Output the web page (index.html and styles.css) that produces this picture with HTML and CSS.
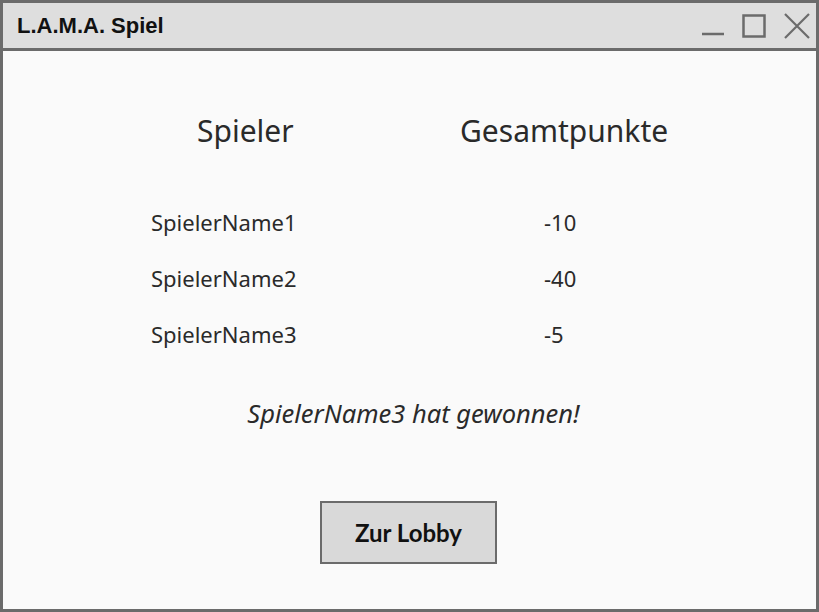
FILE: index.html
```html
<!DOCTYPE html>
<html lang="de">
<head>
<meta charset="utf-8">
<title>L.A.M.A. Spiel</title>
<link rel="stylesheet" href="styles.css">
</head>
<body>
<div class="window">
  <div class="titlebar">
    <span class="title">L.A.M.A. Spiel</span>
    <div class="controls">
      <svg width="22" height="22" viewBox="0 0 22 22"><line x1="0" y1="19" x2="22" y2="19" stroke="#6b6b6b" stroke-width="2.5"/></svg>
      <svg width="24" height="24" viewBox="0 0 24 24"><rect x="1.5" y="1.5" width="21" height="21" fill="none" stroke="#6b6b6b" stroke-width="2.5"/></svg>
      <svg width="26" height="26" viewBox="0 0 26 26"><path d="M1 1 L25 25 M25 1 L1 25" stroke="#6b6b6b" stroke-width="2.2" fill="none"/></svg>
    </div>
  </div>
  <div class="content">
    <div class="head-row">
      <span class="h-player">Spieler</span>
      <span class="h-points">Gesamtpunkte</span>
    </div>
    <div class="rows">
      <span class="name">SpielerName1</span><span class="pts">-10</span>
      <span class="name">SpielerName2</span><span class="pts">-40</span>
      <span class="name">SpielerName3</span><span class="pts">-5</span>
    </div>
    <p class="winner">SpielerName3 hat gewonnen!</p>
    <button class="lobby">Zur Lobby</button>
  </div>
</div>
</body>
</html>
```
FILE: styles.css
```css
* { box-sizing: border-box; }
html, body { margin: 0; padding: 0; background: #fafafa; }
.window {
  width: 819px;
  height: 612px;
  border: 3px solid #6b6b6b;
  background: #fafafa;
  display: flex;
  flex-direction: column;
}
.titlebar {
  height: 48px;
  background: #dedede;
  border-bottom: 3px solid #6b6b6b;
  display: flex;
  align-items: center;
  justify-content: space-between;
  padding: 0 6px 0 14px;
}
.title {
  font-family: "Liberation Sans", Arial, sans-serif;
  font-weight: bold;
  font-size: 22px;
  color: #111;
}
.controls {
  display: flex;
  align-items: center;
  gap: 18px;
}
.content {
  flex: 1;
  display: flex;
  flex-direction: column;
  font-family: "Noto Sans", sans-serif;
  color: #2a2a2a;
}
.head-row {
  display: flex;
  margin-top: 62px;
  font-size: 30px;
  line-height: 36px;
}
.h-player { margin-left: 194px; width: 263px; }
.rows {
  display: grid;
  grid-template-columns: 393px auto;
  grid-auto-rows: 56px;
  margin-top: 59px;
  margin-left: 148px;
  font-size: 22px;
  line-height: 28px;
}
.winner {
  margin: 21px 0 0 0;
  text-align: center;
  font-style: italic;
  font-size: 25.5px;
  line-height: 32px;
  padding-left: 8px;
}
.lobby {
  align-self: center;
  margin-top: 72px;
  margin-left: -2px;
  width: 177px;
  height: 63px;
  background: #d9d9d9;
  border: 2px solid #6b6b6b;
  font-family: Lato, sans-serif;
  font-weight: bold;
  font-size: 24px;
  color: #111;
}
```
